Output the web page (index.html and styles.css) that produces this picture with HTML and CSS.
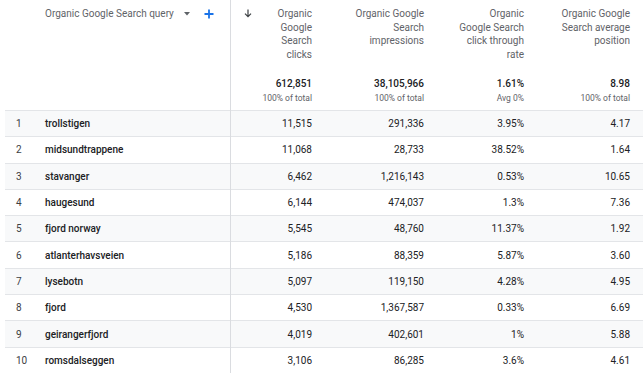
FILE: index.html
```html
<!DOCTYPE html>
<html lang="en">
<head>
  <meta charset="UTF-8" />
  <title>Organic Google Search queries</title>
  <link rel="stylesheet" href="styles.css">
</head>
<body>
  <table class="report">
    <colgroup>
      <col class="c-idx">
      <col class="c-query">
      <col class="c-clicks">
      <col class="c-impr">
      <col class="c-ctr">
      <col class="c-pos">
    </colgroup>
    <thead>
      <tr>
        <th></th>
        <th class="dim">
          <div class="dim-head">
            <span>Organic Google Search query</span>
            <svg class="caret" width="6" height="4" viewBox="0 0 6 4"><path d="M0 0h6L3 3.5z" fill="#5f6368"/></svg>
            <svg class="plus" width="10" height="10" viewBox="0 0 10 10"><path d="M5 0.5v9M0.5 5h9" stroke="#1a73e8" stroke-width="1.8"/></svg>
          </div>
        </th>
        <th class="metric">
          <div class="head-top">
            <svg class="sort" width="8" height="9" viewBox="0 0 8 9"><path d="M4 0.5v7M1 4.6l3 3 3-3" stroke="#3c4043" stroke-width="1.2" fill="none"/></svg>
            <div class="title">Organic<br>Google<br>Search<br>clicks</div>
          </div>
          <div class="total">612,851</div>
          <div class="sub">100% of total</div>
        </th>
        <th class="metric">
          <div class="head-top"><div class="title">Organic Google<br>Search<br>impressions</div></div>
          <div class="total">38,105,966</div>
          <div class="sub">100% of total</div>
        </th>
        <th class="metric">
          <div class="head-top"><div class="title">Organic<br>Google Search<br>click through<br>rate</div></div>
          <div class="total">1.61%</div>
          <div class="sub">Avg 0%</div>
        </th>
        <th class="metric">
          <div class="head-top"><div class="title">Organic Google<br>Search average<br>position</div></div>
          <div class="total">8.98</div>
          <div class="sub">100% of total</div>
        </th>
      </tr>
    </thead>
    <tbody>
      <tr><td class="idx">1</td><td class="query">trollstigen</td><td>11,515</td><td>291,336</td><td>3.95%</td><td>4.17</td></tr>
      <tr><td class="idx">2</td><td class="query">midsundtrappene</td><td>11,068</td><td>28,733</td><td>38.52%</td><td>1.64</td></tr>
      <tr><td class="idx">3</td><td class="query">stavanger</td><td>6,462</td><td>1,216,143</td><td>0.53%</td><td>10.65</td></tr>
      <tr><td class="idx">4</td><td class="query">haugesund</td><td>6,144</td><td>474,037</td><td>1.3%</td><td>7.36</td></tr>
      <tr><td class="idx">5</td><td class="query">fjord norway</td><td>5,545</td><td>48,760</td><td>11.37%</td><td>1.92</td></tr>
      <tr><td class="idx">6</td><td class="query">atlanterhavsveien</td><td>5,186</td><td>88,359</td><td>5.87%</td><td>3.60</td></tr>
      <tr><td class="idx">7</td><td class="query">lysebotn</td><td>5,097</td><td>119,150</td><td>4.28%</td><td>4.95</td></tr>
      <tr><td class="idx">8</td><td class="query">fjord</td><td>4,530</td><td>1,367,587</td><td>0.33%</td><td>6.69</td></tr>
      <tr><td class="idx">9</td><td class="query">geirangerfjord</td><td>4,019</td><td>402,601</td><td>1%</td><td>5.88</td></tr>
      <tr><td class="idx">10</td><td class="query">romsdalseggen</td><td>3,106</td><td>86,285</td><td>3.6%</td><td>4.61</td></tr>
    </tbody>
  </table>
</body>
</html>
```

FILE: styles.css
```css
body {
  margin: 0;
  padding: 0 0 0 5px;
  background: #fff;
  font-family: Roboto, 'Liberation Sans', Arial, sans-serif;
  color: #202124;
}

.report {
  width: 638px;
  table-layout: fixed;
  border-collapse: collapse;
  font-size: 10px;
}

.c-idx { width: 30px; }
.c-query { width: 195px; }
.c-clicks { width: 95px; }
.c-impr { width: 112px; }
.c-ctr { width: 100px; }
.c-pos { width: 106px; }

th {
  padding: 7px 13px 5px 13px;
  vertical-align: top;
  font-weight: 400;
  color: #5f6368;
}

th.dim {
  padding-left: 10px;
  border-right: 1px solid #dadce0;
}

.dim-head {
  display: flex;
  align-items: center;
  line-height: 14px;
}

.caret { margin-left: 10px; }
.plus { margin-left: 14px; margin-top: -1px; }

.head-top {
  display: flex;
  justify-content: flex-end;
  height: 56px;
}

.sort {
  margin-right: auto;
  margin-top: 2px;
}

.title {
  text-align: right;
  line-height: 13.7px;
}

.total {
  margin-top: 14px;
  text-align: right;
  line-height: 14px;
  font-weight: 500;
  color: #202124;
}

.sub {
  text-align: right;
  line-height: 14px;
  font-size: 8.5px;
  color: #5f6368;
}

tbody tr {
  border-top: 1px solid #e3e5e8;
}

tbody tr:nth-child(odd) {
  background: #f8f9fa;
}

td {
  height: 25.3px;
  padding: 0 13px 0 0;
  text-align: right;
  white-space: nowrap;
}

td.idx {
  padding: 0 0 0 11px;
  text-align: left;
  color: #3c4043;
}

td.query {
  padding-left: 10px;
  text-align: left;
  font-weight: 500;
  border-right: 1px solid #dadce0;
}
```
